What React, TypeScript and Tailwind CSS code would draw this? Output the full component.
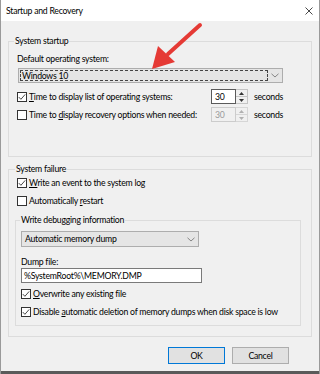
import type { ReactNode } from 'react';

const Box = ({ checked }: { checked?: boolean }) => (
  <span className="w-[10px] h-[10px] border border-[#333333] bg-white flex items-center justify-center shrink-0">
    {checked && (
      <svg width="8" height="8" viewBox="0 0 8 8">
        <path d="M0.8 4.1 L2.9 6.3 L7.2 1.4" fill="none" stroke="#333" strokeWidth="0.9" />
      </svg>
    )}
  </span>
);

const Check = ({ checked, children, className = '' }: { checked?: boolean; children: ReactNode; className?: string }) => (
  <div className={`flex items-center gap-[2px] h-[14px] ${className}`}>
    <Box checked={checked} />
    <span className="whitespace-nowrap">{children}</span>
  </div>
);

const Tri = ({ up, color }: { up?: boolean; color: string }) => (
  <svg width="5" height="3" viewBox="0 0 5 3">
    <path d={up ? 'M0 3 L2.5 0 L5 3 Z' : 'M0 0 L2.5 3 L5 0 Z'} fill={color} />
  </svg>
);

const Spin = ({ disabled }: { disabled?: boolean }) => (
  <div className="flex w-[37px] h-[15px]">
    <div
      className={`w-[25px] flex items-center pl-[3px] border ${
        disabled ? 'border-[#cccccc] bg-[#f0f0f0] text-[#9a9a9a]' : 'border-[#5a5a5a] bg-white'
      }`}
    >
      30
    </div>
    <div className={`w-[12px] flex flex-col border border-l-0 ${disabled ? 'border-[#d6d6d6]' : 'border-[#c4c4c4]'} bg-[#f0f0f0]`}>
      <div className={`flex-1 flex items-center justify-center border-b ${disabled ? 'border-[#d6d6d6]' : 'border-[#c4c4c4]'}`}>
        <Tri up color={disabled ? '#b0b0b0' : '#333'} />
      </div>
      <div className="flex-1 flex items-center justify-center">
        <Tri color={disabled ? '#b0b0b0' : '#333'} />
      </div>
    </div>
  </div>
);

const Chevron = () => (
  <svg width="8" height="5" viewBox="0 0 8 5">
    <path d="M0.5 0.8 L4 4 L7.5 0.8" fill="none" stroke="#7a7a7a" strokeWidth="0.9" />
  </svg>
);

export default function App() {
  return (
    <div className="relative w-[320px] h-[374px] flex flex-col bg-[#f0f0f0] border-x border-[#9a9a9a] text-[8.7px] tracking-[-0.25px] leading-[12px] text-black font-[Lato,'Liberation_Sans',sans-serif]">
      {/* title bar */}
      <div className="h-[21px] bg-white flex items-center justify-between pl-[5px] pr-[6px] shrink-0">
        <span>Startup and Recovery</span>
        <svg width="8" height="8" viewBox="0 0 8 8">
          <path d="M0.5 0.5 L7.5 7.5 M7.5 0.5 L0.5 7.5" stroke="#333" strokeWidth="0.9" />
        </svg>
      </div>

      <div className="flex-1 flex flex-col px-[7px] pt-[14px]">
        {/* System startup */}
        <fieldset className="border border-[#dcdcdc] pl-[8px] pr-[8px] pb-[34px]">
          <legend className="px-[1px] ml-[-3px]">System startup</legend>
          <div className="mt-[6px]">Default operating system:</div>
          <div className="mt-[3px] ml-[1px] w-[265px] h-[15px] border border-[#adadad] bg-[#e5e5e5] flex items-center p-[1px]">
            <div className="flex-1 h-full border border-dashed border-[#444] flex items-center pl-[1px]">Windows 10</div>
            <div className="w-[13px] flex justify-center">
              <Chevron />
            </div>
          </div>
          <div className="mt-[6px] flex items-center h-[15px]">
            <Check checked className="w-[194px]">
              <span className="underline">T</span>ime to display list of operating systems:
            </Check>
            <Spin />
            <span className="ml-[6px]">seconds</span>
          </div>
          <div className="mt-[3px] flex items-center h-[15px]">
            <Check className="w-[194px]">
              Time to <span className="underline">d</span>isplay recovery options when needed:
            </Check>
            <Spin disabled />
            <span className="ml-[6px]">seconds</span>
          </div>
        </fieldset>

        {/* System failure */}
        <fieldset className="mt-[6px] border border-[#dcdcdc] pl-[6px] pr-[9px] pb-[10px]">
          <legend className="px-[1px]">System failure</legend>
          <Check checked className="mt-[1px] ml-[2px]">
            <span className="underline">W</span>rite an event to the system log
          </Check>
          <Check className="mt-[4px] ml-[2px]">
            Automatically <span className="underline">r</span>estart
          </Check>

          <fieldset className="mt-[6px] w-[286px] border border-[#dcdcdc] pl-[5px] pb-[6px]">
            <legend className="px-[1px] ml-[-1px]">Write debugging information</legend>
            <div className="mt-[5px] w-[178px] h-[16px] border border-[#adadad] bg-[#e5e5e5] flex items-center pl-[3px]">
              <span className="flex-1">Automatic memory dump</span>
              <div className="w-[14px] flex justify-center">
                <Chevron />
              </div>
            </div>
            <div className="mt-[9px] leading-[11px]">Dump file:</div>
            <div className="mt-[1px] w-[181px] h-[15px] border border-[#7a7a7a] bg-white flex items-center pl-[2px]">
              %SystemRoot%\MEMORY.DMP
            </div>
            <Check checked className="mt-[4px]">
              <span className="underline">O</span>verwrite any existing file
            </Check>
            <Check checked className="mt-[4px]">
              Disable <span className="underline">a</span>utomatic deletion of memory dumps when disk space is low
            </Check>
          </fieldset>
        </fieldset>

        {/* buttons */}
        <div className="mt-[10px] flex justify-end gap-[7px] pr-[23px]">
          <button className="w-[57px] h-[17px] border border-[#0078d7] bg-[#e1e1e1] flex items-center justify-center">OK</button>
          <button className="w-[57px] h-[17px] border border-[#adadad] bg-[#e1e1e1] flex items-center justify-center">Cancel</button>
        </div>
      </div>
      <div className="h-[3px] shrink-0 bg-[#5a5a5a]" />

      {/* red annotation arrow */}
      <svg className="absolute inset-0 pointer-events-none" width="320" height="374" viewBox="0 0 320 374">
        <line x1="199" y1="25" x2="167" y2="54" stroke="#e53a35" strokeWidth="4" strokeLinecap="round" />
        <path d="M151 69 L157 46 L174 62 Z" fill="#e53a35" />
      </svg>
    </div>
  );
}
